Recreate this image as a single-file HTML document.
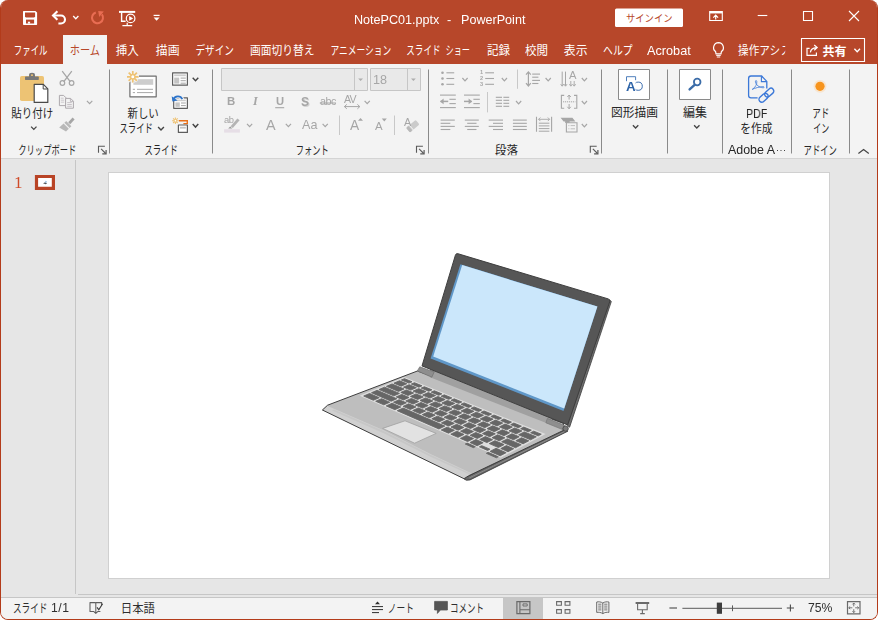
<!DOCTYPE html>
<html lang="ja"><head><meta charset="utf-8"><title>NotePC01.pptx - PowerPoint</title>
<style>
html,body{margin:0;padding:0;background:#fff;}
body{width:878px;height:620px;overflow:hidden;font-family:"Liberation Sans",sans-serif;}
#app{position:relative;width:878px;height:620px;overflow:hidden;background:#fff;}
#win{position:absolute;left:0;top:0;width:876px;height:619px;border:1px solid #B33B1A;border-top:none;border-radius:8px;overflow:hidden;background:#E6E6E6;box-sizing:content-box;}
.abs{position:absolute;}
.t{position:absolute;white-space:pre;will-change:transform;}
svg#ov{position:absolute;left:0;top:0;}
svg#ov text{font-family:"Liberation Sans","Noto Sans CJK JP",sans-serif;}
</style></head>
<body><div id="app">
<div id="win">
<div class="abs" style="left:-1px;top:0px;width:878px;height:64px;background:#B7472A;"></div><div class="abs" style="left:62px;top:35px;width:44px;height:29px;background:#F3F3F3;"></div><div class="abs" style="left:0px;top:64px;width:876px;height:94px;background:#F3F3F3;"></div><div class="abs" style="left:0px;top:158px;width:876px;height:1px;background:#D4D4D4;"></div><div class="abs" style="left:0px;top:159px;width:876px;height:438px;background:#E6E6E6;"></div><div class="abs" style="left:74px;top:160px;width:1px;height:434px;background:#C6C6C6;"></div><div class="abs" style="left:77px;top:594px;width:799px;height:1px;background:#C6C6C6;"></div><div class="abs" style="left:107px;top:172px;width:722px;height:407px;background:#FFFFFF;box-sizing:border-box;border:1px solid #D0D0D0;"></div><div class="abs" style="left:0px;top:597px;width:876px;height:1px;background:#C6C6C6;"></div><div class="abs" style="left:0px;top:598px;width:876px;height:21px;background:#F3F3F3;"></div><div class="abs" style="left:502px;top:598px;width:40px;height:21px;background:#C6C6C6;"></div>
</div>
<svg id="ov" width="878" height="620" viewBox="0 0 878 620">
<path d="M23 11.6A0.7 0.7 0 0 1 23.7 10.9H35.4L37.1 12.6V24.3A0.7 0.7 0 0 1 36.4 25H23.7A0.7 0.7 0 0 1 23 24.3Z" fill="#FFFFFF" />
<path d="M25 12.5H35.1V16.4L34.2 17.6H25.9L25 16.4Z" fill="#B7472A" />
<rect x="26" y="19.6" width="8.1" height="3.9" fill="#B7472A" />
<rect x="27.9" y="21.7" width="2.2" height="1.9" fill="#FFFFFF" />
<path d="M57.4 11.2L53 15.5L57.4 19.8" fill="none" stroke="#FFFFFF" stroke-width="2.1" />
<path d="M53.4 15.5H61A4 4 0 0 1 61 23.5H58.4" fill="none" stroke="#FFFFFF" stroke-width="2.1" />
<path d="M73.2 15.999999999999998L75.8 18.799999999999997L78.39999999999999 15.999999999999998" fill="none" stroke="#FFFFFF" stroke-width="1.3" />
<path d="M95.8 12.5A5.5 5.5 0 1 0 101.9 14.4" fill="none" stroke="#E96D53" stroke-width="2" />
<path d="M98.2 11.1L103.8 11.5L99.2 16.9Z" fill="#E96D53" />
<path d="M119 11.9H135.2" fill="none" stroke="#FFFFFF" stroke-width="2" />
<path d="M121.6 12V21.2H125.6" fill="none" stroke="#FFFFFF" stroke-width="1.4" />
<circle cx="130.6" cy="18.4" r="4.3" fill="none" stroke="#FFFFFF" stroke-width="1.2"/>
<path d="M129.2 16L133.2 18.4L129.2 20.8Z" fill="#FFFFFF" />
<path d="M127.2 22.8V25.4M122.4 25.6H132.2" fill="none" stroke="#FFFFFF" stroke-width="1.2" />
<path d="M153.6 15.4H159.6" fill="none" stroke="#FFFFFF" stroke-width="1.2" />
<path d="M153.6 17.6H159.6L156.6 20.8Z" fill="#FFFFFF" />
<rect x="615" y="8.5" width="68" height="18.5" fill="#FFFFFF" rx="1.5"/>
<text x="626" y="22.3" font-size="10" fill="#B7472A" textLength="46.5" lengthAdjust="spacingAndGlyphs">サインイン</text>
<path d="M709.7 11.5H722.3V20.5H709.7Z" fill="none" stroke="#FFFFFF" stroke-width="1.1" />
<path d="M709.7 12.5H722.3" fill="none" stroke="#FFFFFF" stroke-width="1.9" />
<path d="M715.7 19.4V15.4M713.3 17.6L715.7 15.2L718.1 17.6" fill="none" stroke="#FFFFFF" stroke-width="1.2" />
<path d="M757.7 15.5H767.3" fill="none" stroke="#FFFFFF" stroke-width="1.1" />
<path d="M803.5 11.5H812.5V20.5H803.5Z" fill="none" stroke="#FFFFFF" stroke-width="1.1" />
<path d="M849 11L859 21M859 11L849 21" fill="none" stroke="#FFFFFF" stroke-width="1.1" />
<text x="13.8" y="55.3" font-size="12" fill="#FFFFFF" textLength="33.7" lengthAdjust="spacingAndGlyphs">ファイル</text>
<text x="69.8" y="55.3" font-size="12" fill="#B7472A" textLength="30.2" lengthAdjust="spacingAndGlyphs">ホーム</text>
<text x="115.8" y="55.3" font-size="12" fill="#FFFFFF" textLength="23" lengthAdjust="spacingAndGlyphs">挿入</text>
<text x="155.8" y="55.3" font-size="12" fill="#FFFFFF" textLength="23.7" lengthAdjust="spacingAndGlyphs">描画</text>
<text x="195.5" y="55.3" font-size="12" fill="#FFFFFF" textLength="38.3" lengthAdjust="spacingAndGlyphs">デザイン</text>
<text x="250" y="55.3" font-size="12" fill="#FFFFFF" textLength="64.5" lengthAdjust="spacingAndGlyphs">画面切り替え</text>
<text x="330.5" y="55.3" font-size="12" fill="#FFFFFF" textLength="60.7" lengthAdjust="spacingAndGlyphs">アニメーション</text>
<text x="406.3" y="55.3" font-size="12" fill="#FFFFFF" textLength="34.2" lengthAdjust="spacingAndGlyphs">スライド</text>
<text x="445.5" y="55.3" font-size="12" fill="#FFFFFF" textLength="24.5" lengthAdjust="spacingAndGlyphs">ショー</text>
<text x="487" y="55.3" font-size="12" fill="#FFFFFF" textLength="23" lengthAdjust="spacingAndGlyphs">記録</text>
<text x="525" y="55.3" font-size="12" fill="#FFFFFF" textLength="23" lengthAdjust="spacingAndGlyphs">校閲</text>
<text x="563.8" y="55.3" font-size="12" fill="#FFFFFF" textLength="23.7" lengthAdjust="spacingAndGlyphs">表示</text>
<text x="603.1" y="55.3" font-size="12" fill="#FFFFFF" textLength="29.5" lengthAdjust="spacingAndGlyphs">ヘルプ</text>
<path d="M718.5 42.6A5 5 0 0 1 721.4 51.6L721 53.8H716L715.6 51.6A5 5 0 0 1 718.5 42.6Z" fill="none" stroke="#FFFFFF" stroke-width="1.2" />
<path d="M716.2 55.4H720.8M716.8 57H720.2" fill="none" stroke="#FFFFFF" stroke-width="1" />
<text x="738.1" y="55.3" font-size="12" fill="#FFFFFF" textLength="41.9" lengthAdjust="spacingAndGlyphs">操作アシ</text>
<clipPath id="cpt"><rect x="0" y="-12" width="4.2" height="16"/></clipPath>
<text transform="translate(781 55.3)" x="0" y="0" font-size="12" fill="#FFFFFF" clip-path="url(#cpt)" textLength="9.2" lengthAdjust="spacingAndGlyphs">ス</text>
<path d="M801.5 38.5H864.5V61.5H801.5Z" fill="none" stroke="#FFFFFF" stroke-width="1.1" />
<path d="M809.6 48.4H807V55.4H816.4V52.6" fill="none" stroke="#FFFFFF" stroke-width="1.2" />
<path d="M810.4 52.4C810.8 49.4 813 47.8 816.4 47.6M814.2 45L817.2 47.6L814.2 50.2" fill="none" stroke="#FFFFFF" stroke-width="1.2" />
<text x="822.4" y="55.7" font-size="12" font-weight="bold" fill="#FFFFFF" textLength="24" lengthAdjust="spacingAndGlyphs">共有</text>
<path d="M854.4000000000001 48.7L857.2 51.7L860.0 48.7" fill="none" stroke="#FFFFFF" stroke-width="1.3" />
<line x1="109.5" y1="69.5" x2="109.5" y2="153.5" stroke="#8A8A8A" stroke-width="1" />
<line x1="212.5" y1="69.5" x2="212.5" y2="153.5" stroke="#8A8A8A" stroke-width="1" />
<line x1="428.5" y1="69.5" x2="428.5" y2="153.5" stroke="#8A8A8A" stroke-width="1" />
<line x1="601.5" y1="69.5" x2="601.5" y2="153.5" stroke="#8A8A8A" stroke-width="1" />
<line x1="667.5" y1="69.5" x2="667.5" y2="153.5" stroke="#8A8A8A" stroke-width="1" />
<line x1="722.5" y1="69.5" x2="722.5" y2="153.5" stroke="#8A8A8A" stroke-width="1" />
<line x1="791.5" y1="69.5" x2="791.5" y2="153.5" stroke="#8A8A8A" stroke-width="1" />
<line x1="849.5" y1="69.5" x2="849.5" y2="153.5" stroke="#8A8A8A" stroke-width="1" />
<clipPath id="cgl"><rect x="-5" y="-20" width="120" height="20.75"/></clipPath>
<rect x="20" y="76" width="24" height="25" fill="#EDC374" rx="1.8"/>
<rect x="25" y="76.6" width="13.8" height="3.3" fill="#787878" rx="0.6"/>
<path d="M29 77V75.2A3 2.4 0 0 1 35 75.2V77Z" fill="#787878" />
<rect x="31" y="74.4" width="2" height="1.5" fill="#EDC374" />
<path d="M34.2 84.4H43.4L47.8 88.8V102.4H34.2Z" fill="#FFFFFF" stroke="#4A4A4A" stroke-width="1.2" stroke-linejoin="round"/>
<path d="M43.2 84.6V89H47.6" fill="none" stroke="#4A4A4A" stroke-width="1" />
<text x="11.3" y="118.3" font-size="12" fill="#262626" textLength="42" lengthAdjust="spacingAndGlyphs">貼り付け</text>
<path d="M31.099999999999998 126.6L33.8 129.4L36.5 126.6" fill="none" stroke="#444444" stroke-width="1.3" />
<path d="M62.2 71.2L70.2 81.6M71.8 71.2L63.8 81.6" fill="none" stroke="#A6A6A6" stroke-width="1.3" />
<circle cx="62.4" cy="83" r="2.3" fill="none" stroke="#A6A6A6" stroke-width="1.2"/>
<circle cx="71.6" cy="83" r="2.3" fill="none" stroke="#A6A6A6" stroke-width="1.2"/>
<path d="M59.4 95.4H63.6L66 97.8V105.6H59.4Z" fill="#F3F3F3" stroke="#ADA8AD" stroke-width="1" />
<path d="M60.8 98.2H63.6M60.8 100.2H64.2M60.8 102.2H64.2" fill="none" stroke="#C4BEC4" stroke-width="0.8" />
<path d="M65.6 98.4H70.6L73.4 101.2V108.2H65.6Z" fill="#F3F3F3" stroke="#ADA8AD" stroke-width="1" />
<path d="M70.4 98.6V101.4H73.2" fill="none" stroke="#ADA8AD" stroke-width="0.8" />
<path d="M67.2 102.6H71.8M67.2 104.5H71.8M67.2 106.3H71.8" fill="none" stroke="#BDB6BD" stroke-width="0.8" />
<path d="M86.89999999999999 100.8L89.6 103.60000000000001L92.3 100.8" fill="none" stroke="#A6A6A6" stroke-width="1.2" />
<path d="M68.2 122.2L72.6 117.6L74.6 119.6L70.2 124.2Z" fill="#A6A6A6" />
<path d="M66.2 121L71.4 126.2L69.6 128L64.4 122.8Z" fill="#B8B8B8" />
<path d="M63.6 123.6L68.8 128.8L66 131.4L59.2 127.6Z" fill="#B8B8B8" />
<text transform="translate(18.3 154.5)" x="0" y="0" font-size="12" fill="#262626" clip-path="url(#cgl)" textLength="58" lengthAdjust="spacingAndGlyphs">クリップボード</text>
<path d="M98.5 152.70000000000002V146.3H104.9" fill="none" stroke="#5A5A5A" stroke-width="1.1" />
<path d="M101.1 148.9L105.7 153.5" fill="none" stroke="#5A5A5A" stroke-width="1.1" />
<path d="M102.3 153.9H106.1V150.10000000000002" fill="none" stroke="#5A5A5A" stroke-width="1.2" />
<path d="M129.9 76.2H156.2V96.8H129.9Z" fill="#FFFFFF" stroke="#6E6E6E" stroke-width="1.2" stroke-linejoin="round"/>
<rect x="133.4" y="79.2" width="19.8" height="5.6" fill="#CDCDCD" />
<path d="M132.8 89.3H135M137 89.3H153M132.8 92.6H135M137 92.6H153" fill="none" stroke="#A8A8A8" stroke-width="1" />
<path d="M132.8 70.6V83M126.6 76.8H139M128.4 72.4L137.2 81.2M137.2 72.4L128.4 81.2" fill="none" stroke="#F3F3F3" stroke-width="3.4" />
<path d="M132.8 71V82.6M127 76.8H138.6M128.7 72.7L136.9 80.9M136.9 72.7L128.7 80.9" fill="none" stroke="#EEC273" stroke-width="1.7" />
<circle cx="132.8" cy="76.8" r="2.1" fill="#FFFFFF" stroke="#EEC273" stroke-width="1.2"/>
<text x="127.5" y="118.3" font-size="12" fill="#262626" textLength="31.3" lengthAdjust="spacingAndGlyphs">新しい</text>
<text x="119.5" y="133.2" font-size="12" fill="#262626" textLength="33.5" lengthAdjust="spacingAndGlyphs">スライド</text>
<path d="M158.1 127.1L161 130.1L163.9 127.1" fill="none" stroke="#444444" stroke-width="1.4" />
<path d="M172.6 72.8H187.4V85.2H172.6Z" fill="#FFFFFF" stroke="#5E5E5E" stroke-width="1.2" stroke-linejoin="round"/>
<rect x="174.2" y="74.4" width="11.6" height="1.8" fill="#CDCDCD" />
<rect x="174.2" y="77.6" width="5" height="6" fill="#C4C4C4" />
<path d="M180.6 78.1H185.8M180.6 80.7H185.8M180.6 83.2H185.8" fill="none" stroke="#9A9A9A" stroke-width="0.9" />
<path d="M192.7 77.8L195.5 80.8L198.3 77.8" fill="none" stroke="#444444" stroke-width="1.4" />
<path d="M173.7 97.8H187.4V108.3H173.7Z" fill="#FFFFFF" stroke="#5E5E5E" stroke-width="1.2" stroke-linejoin="round"/>
<rect x="175.4" y="99.6" width="10.4" height="1.6" fill="#CDCDCD" />
<rect x="175.4" y="102.4" width="4.4" height="4.4" fill="#C4C4C4" />
<path d="M181 103H185.8M181 105.6H185.8" fill="none" stroke="#9A9A9A" stroke-width="0.9" />
<path d="M182.4 99.4A4.9 4.9 0 0 0 173.2 99.8" fill="none" stroke="#F3F3F3" stroke-width="3.8" />
<path d="M182.3 99.2A4.8 4.8 0 0 0 173.4 99.6" fill="none" stroke="#2E74C9" stroke-width="1.9" />
<path d="M171.7 96.2L172.4 101.6L177.6 100.6Z" fill="#2E74C9" />
<path d="M178.2 120.8H187.3V123.6H183.4" fill="none" stroke="#E8701A" stroke-width="1.4" />
<path d="M178.4 125H187.4V132.4H178.4Z" fill="#FFFFFF" stroke="#5E5E5E" stroke-width="1.2" stroke-linejoin="round"/>
<rect x="180" y="126.8" width="5.8" height="1.8" fill="#C4C4C4" />
<path d="M175.4 117.2V124.2M171.9 120.7H178.9M172.9 118.2L177.9 123.2M177.9 118.2L172.9 123.2" fill="none" stroke="#F3F3F3" stroke-width="2.4" />
<path d="M175.4 117.4V124M172.1 120.7H178.7M173.1 118.4L177.7 123M177.7 118.4L173.1 123" fill="none" stroke="#EEC273" stroke-width="1.1" />
<circle cx="175.4" cy="120.7" r="1.2" fill="#FFFFFF" stroke="#EEC273" stroke-width="0.8"/>
<path d="M192.7 124.1L195.5 127.1L198.3 124.1" fill="none" stroke="#444444" stroke-width="1.4" />
<text transform="translate(144.5 154.5)" x="0" y="0" font-size="12" fill="#262626" clip-path="url(#cgl)" textLength="33.5" lengthAdjust="spacingAndGlyphs">スライド</text>
<path d="M221.5 68.5H367.5V90.5H221.5Z" fill="#E9E9E9" stroke="#C6C6C6" stroke-width="1" />
<line x1="354.5" y1="69" x2="354.5" y2="90" stroke="#C6C6C6" stroke-width="1" />
<path d="M358.2 78.4H363L360.6 81Z" fill="#ADADAD" />
<path d="M370.5 68.5H420.5V90.5H370.5Z" fill="#E9E9E9" stroke="#C6C6C6" stroke-width="1" />
<line x1="407.5" y1="69" x2="407.5" y2="90" stroke="#C6C6C6" stroke-width="1" />
<path d="M411 78.4H415.8L413.4 81Z" fill="#ADADAD" />
<line x1="275.2" y1="107.7" x2="284.2" y2="107.7" stroke="#A6A6A6" stroke-width="1.1" />
<line x1="319.8" y1="103" x2="336" y2="103" stroke="#A6A6A6" stroke-width="1" />
<path d="M344.4 106.6H359.8M346.8 104.4L344.4 106.6L346.8 108.8M357.4 104.4L359.8 106.6L357.4 108.8" fill="none" stroke="#A6A6A6" stroke-width="1" />
<path d="M364.59999999999997 100.8L367.2 103.60000000000001L369.8 100.8" fill="none" stroke="#A6A6A6" stroke-width="1.2" />
<path d="M230.6 126.2L237.4 118.4L239.6 120.2L232.8 128Z" fill="#B4B4B4" />
<path d="M228.2 128.6L230.2 126.6L232.4 128.4Z" fill="#9A9A9A" />
<rect x="224.1" y="129.2" width="15.8" height="3.4" fill="#E6DEE6" />
<path d="M247.0 123.8L249.6 126.60000000000001L252.2 123.8" fill="none" stroke="#A6A6A6" stroke-width="1.2" />
<path d="M285.79999999999995 123.8L288.4 126.60000000000001L291.0 123.8" fill="none" stroke="#A6A6A6" stroke-width="1.2" />
<path d="M322.59999999999997 123.8L325.2 126.60000000000001L327.8 123.8" fill="none" stroke="#A6A6A6" stroke-width="1.2" />
<line x1="339.5" y1="115.5" x2="339.5" y2="135" stroke="#C8C8C8" stroke-width="1" />
<path d="M358 120.8H363L360.5 118Z" fill="#A6A6A6" />
<path d="M381.8 118.6H386.8L384.3 121.4Z" fill="#A6A6A6" />
<line x1="394.5" y1="115.5" x2="394.5" y2="135" stroke="#C8C8C8" stroke-width="1" />
<g transform="translate(412.8 126.2) rotate(-40)"><rect x="-6.2" y="-3" width="12.4" height="6" rx="1.2" fill="#CBCBCB"/><rect x="-6.2" y="-3" width="3" height="6" rx="1" fill="#B9B9B9"/><rect x="-2.4" y="-3.6" width="0.9" height="7.2" fill="#F3F3F3"/></g>
<text transform="translate(295.8 154.5)" x="0" y="0" font-size="12" fill="#262626" clip-path="url(#cgl)" textLength="33" lengthAdjust="spacingAndGlyphs">フォント</text>
<path d="M416.5 152.70000000000002V146.3H422.9" fill="none" stroke="#5A5A5A" stroke-width="1.1" />
<path d="M419.1 148.9L423.7 153.5" fill="none" stroke="#5A5A5A" stroke-width="1.1" />
<path d="M420.3 153.9H424.1V150.10000000000002" fill="none" stroke="#5A5A5A" stroke-width="1.2" />
<circle cx="442.5" cy="72.8" r="1.3" fill="#A6A6A6"/>
<line x1="446.4" y1="72.8" x2="454.2" y2="72.8" stroke="#A6A6A6" stroke-width="1.1" />
<circle cx="442.5" cy="78.5" r="1.3" fill="#A6A6A6"/>
<line x1="446.4" y1="78.5" x2="454.2" y2="78.5" stroke="#A6A6A6" stroke-width="1.1" />
<circle cx="442.5" cy="84.3" r="1.3" fill="#A6A6A6"/>
<line x1="446.4" y1="84.3" x2="454.2" y2="84.3" stroke="#A6A6A6" stroke-width="1.1" />
<path d="M462.4 78.0L465 80.80000000000001L467.6 78.0" fill="none" stroke="#A6A6A6" stroke-width="1.2" />
<line x1="485.2" y1="72.8" x2="494" y2="72.8" stroke="#A6A6A6" stroke-width="1.1" />
<line x1="485.2" y1="78.5" x2="494" y2="78.5" stroke="#A6A6A6" stroke-width="1.1" />
<line x1="485.2" y1="84.3" x2="494" y2="84.3" stroke="#A6A6A6" stroke-width="1.1" />
<path d="M501.79999999999995 78.0L504.4 80.80000000000001L507.0 78.0" fill="none" stroke="#A6A6A6" stroke-width="1.2" />
<line x1="517.5" y1="69.5" x2="517.5" y2="88.8" stroke="#C8C8C8" stroke-width="1" />
<path d="M528.4 72V85.8M526 74.6L528.4 71.8L530.8 74.6M526 83.2L528.4 86L530.8 83.2" fill="none" stroke="#A6A6A6" stroke-width="1.2" />
<line x1="532.2" y1="74.1" x2="540" y2="74.1" stroke="#A6A6A6" stroke-width="1.1" />
<line x1="532.2" y1="77.2" x2="538.4" y2="77.2" stroke="#A6A6A6" stroke-width="1.1" />
<line x1="532.2" y1="80.4" x2="540" y2="80.4" stroke="#A6A6A6" stroke-width="1.1" />
<line x1="532.2" y1="83.5" x2="538.4" y2="83.5" stroke="#A6A6A6" stroke-width="1.1" />
<path d="M545.6 78.0L548.2 80.80000000000001L550.8000000000001 78.0" fill="none" stroke="#A6A6A6" stroke-width="1.2" />
<path d="M562.2 71.6V85.8M560.7 84.2L562.2 86.2L563.7 84.2" fill="none" stroke="#A6A6A6" stroke-width="1" />
<path d="M565.5 71.6V85.8M564.0 84.2L565.5 86.2L567.0 84.2" fill="none" stroke="#A6A6A6" stroke-width="1" />
<path d="M570.8 81V85.8M569.3 84.2L570.8 86.2L572.3 84.2" fill="none" stroke="#A6A6A6" stroke-width="0.9" />
<path d="M574.2 81V85.8M572.7 84.2L574.2 86.2L575.7 84.2" fill="none" stroke="#A6A6A6" stroke-width="0.9" />
<path d="M581.8 78.0L584.4 80.80000000000001L587.0 78.0" fill="none" stroke="#A6A6A6" stroke-width="1.2" />
<line x1="440" y1="95.1" x2="455.8" y2="95.1" stroke="#A6A6A6" stroke-width="1.1" />
<line x1="440" y1="107.6" x2="455.8" y2="107.6" stroke="#A6A6A6" stroke-width="1.1" />
<line x1="449.4" y1="99.3" x2="455.8" y2="99.3" stroke="#A6A6A6" stroke-width="1.1" />
<line x1="449.4" y1="103.6" x2="455.8" y2="103.6" stroke="#A6A6A6" stroke-width="1.1" />
<path d="M448.2 101.4H440.6" fill="none" stroke="#A6A6A6" stroke-width="1.5" />
<path d="M443.6 98.6L440 101.4L443.6 104.2Z" fill="#A6A6A6" />
<line x1="464" y1="95.1" x2="479.8" y2="95.1" stroke="#A6A6A6" stroke-width="1.1" />
<line x1="464" y1="107.6" x2="479.8" y2="107.6" stroke="#A6A6A6" stroke-width="1.1" />
<line x1="473.4" y1="99.3" x2="479.8" y2="99.3" stroke="#A6A6A6" stroke-width="1.1" />
<line x1="473.4" y1="103.6" x2="479.8" y2="103.6" stroke="#A6A6A6" stroke-width="1.1" />
<path d="M464 101.4H471.6" fill="none" stroke="#A6A6A6" stroke-width="1.5" />
<path d="M468.6 98.6L472.2 101.4L468.6 104.2Z" fill="#A6A6A6" />
<line x1="487.5" y1="92" x2="487.5" y2="112.4" stroke="#C8C8C8" stroke-width="1" />
<line x1="495.8" y1="97.3" x2="502" y2="97.3" stroke="#A6A6A6" stroke-width="1.1" />
<line x1="503.4" y1="97.3" x2="509.2" y2="97.3" stroke="#A6A6A6" stroke-width="1.1" />
<line x1="495.8" y1="100.3" x2="502" y2="100.3" stroke="#A6A6A6" stroke-width="1.1" />
<line x1="503.4" y1="100.3" x2="509.2" y2="100.3" stroke="#A6A6A6" stroke-width="1.1" />
<line x1="495.8" y1="103.3" x2="502" y2="103.3" stroke="#A6A6A6" stroke-width="1.1" />
<line x1="503.4" y1="103.3" x2="509.2" y2="103.3" stroke="#A6A6A6" stroke-width="1.1" />
<line x1="495.8" y1="106.3" x2="502" y2="106.3" stroke="#A6A6A6" stroke-width="1.1" />
<line x1="503.4" y1="106.3" x2="509.2" y2="106.3" stroke="#A6A6A6" stroke-width="1.1" />
<path d="M516.0 101.0L518.6 103.80000000000001L521.2 101.0" fill="none" stroke="#A6A6A6" stroke-width="1.2" />
<path d="M564.2 95.4H561.4V108.2H564.2M574 95.4H576.8V108.2H574" fill="none" stroke="#A6A6A6" stroke-width="1.1" />
<path d="M563 101.8H575.4" fill="none" stroke="#A6A6A6" stroke-width="1" stroke-dasharray="1.2 0.8"/>
<path d="M569.1 95.2V99.6M567.4 97L569.1 95L570.8 97M569.1 108.6V104M567.4 106.8L569.1 108.8L570.8 106.8" fill="none" stroke="#A6A6A6" stroke-width="1" />
<path d="M581.8 101.0L584.4 103.80000000000001L587.0 101.0" fill="none" stroke="#A6A6A6" stroke-width="1.2" />
<line x1="440.6" y1="120.1" x2="454.8" y2="120.1" stroke="#A6A6A6" stroke-width="1.1" />
<line x1="464.8" y1="120.1" x2="478.8" y2="120.1" stroke="#A6A6A6" stroke-width="1.1" />
<line x1="488.7" y1="120.1" x2="503" y2="120.1" stroke="#A6A6A6" stroke-width="1.1" />
<line x1="512.9" y1="120.1" x2="526.8" y2="120.1" stroke="#A6A6A6" stroke-width="1.1" />
<line x1="440.6" y1="123.3" x2="450.3" y2="123.3" stroke="#A6A6A6" stroke-width="1.1" />
<line x1="467.2" y1="123.3" x2="476.5" y2="123.3" stroke="#A6A6A6" stroke-width="1.1" />
<line x1="493" y1="123.3" x2="503" y2="123.3" stroke="#A6A6A6" stroke-width="1.1" />
<line x1="512.9" y1="123.3" x2="526.8" y2="123.3" stroke="#A6A6A6" stroke-width="1.1" />
<line x1="440.6" y1="126.4" x2="454.8" y2="126.4" stroke="#A6A6A6" stroke-width="1.1" />
<line x1="464.8" y1="126.4" x2="478.8" y2="126.4" stroke="#A6A6A6" stroke-width="1.1" />
<line x1="488.7" y1="126.4" x2="503" y2="126.4" stroke="#A6A6A6" stroke-width="1.1" />
<line x1="512.9" y1="126.4" x2="526.8" y2="126.4" stroke="#A6A6A6" stroke-width="1.1" />
<line x1="440.6" y1="129.5" x2="450.3" y2="129.5" stroke="#A6A6A6" stroke-width="1.1" />
<line x1="467.2" y1="129.5" x2="476.5" y2="129.5" stroke="#A6A6A6" stroke-width="1.1" />
<line x1="493" y1="129.5" x2="503" y2="129.5" stroke="#A6A6A6" stroke-width="1.1" />
<line x1="512.9" y1="129.5" x2="526.8" y2="129.5" stroke="#A6A6A6" stroke-width="1.1" />
<path d="M536.5 116.8V131.8M551.6 116.8V131.8" fill="none" stroke="#A6A6A6" stroke-width="1.1" />
<path d="M538.6 119.3H549.6M540.4 117.5L538.6 119.3L540.4 121.1M547.8 117.5L549.6 119.3L547.8 121.1" fill="none" stroke="#A6A6A6" stroke-width="0.9" />
<line x1="538.8" y1="123.2" x2="549.4" y2="123.2" stroke="#A6A6A6" stroke-width="1" />
<line x1="538.8" y1="125.9" x2="549.4" y2="125.9" stroke="#A6A6A6" stroke-width="1" />
<line x1="538.8" y1="128.6" x2="549.4" y2="128.6" stroke="#A6A6A6" stroke-width="1" />
<line x1="538.8" y1="131.2" x2="549.4" y2="131.2" stroke="#A6A6A6" stroke-width="1" />
<path d="M560.6 117.8H572.4L575.4 121.4H569.6V123H565.2V121.6L563.6 121.6Z" fill="#A6A6A6" />
<path d="M566.4 122.8H577V132H566.4Z" fill="#F3F3F3" stroke="#A6A6A6" stroke-width="1.1" />
<path d="M568.4 125.6H569.4M570.6 125.6H575M568.4 128.8H569.4M570.6 128.8H575" fill="none" stroke="#B8B8B8" stroke-width="0.9" />
<path d="M581.8 124.0L584.4 126.80000000000001L587.0 124.0" fill="none" stroke="#A6A6A6" stroke-width="1.2" />
<text transform="translate(495 154.5)" x="0" y="0" font-size="12" fill="#262626" clip-path="url(#cgl)" textLength="23" lengthAdjust="spacingAndGlyphs">段落</text>
<path d="M590.3 152.70000000000002V146.3H596.6999999999999" fill="none" stroke="#5A5A5A" stroke-width="1.1" />
<path d="M592.9 148.9L597.5 153.5" fill="none" stroke="#5A5A5A" stroke-width="1.1" />
<path d="M594.0999999999999 153.9H597.9V150.10000000000002" fill="none" stroke="#5A5A5A" stroke-width="1.2" />
<path d="M618.5 69.5H649.5V99.5H618.5Z" fill="#FFFFFF" stroke="#8A8A8A" stroke-width="1" />
<path d="M626.5 81.2V76.7H635.6V80.2" fill="none" stroke="#4F7FBC" stroke-width="1" />
<circle cx="638.2" cy="86.2" r="4.1" fill="none" stroke="#3E6FB0" stroke-width="1"/>
<rect x="627" y="81.4" width="8.6" height="10.6" fill="#FFFFFF" />
<text x="611" y="117.4" font-size="12" fill="#262626" textLength="47" lengthAdjust="spacingAndGlyphs">図形描画</text>
<path d="M632.9 125.19999999999999L635.6 128.0L638.3000000000001 125.19999999999999" fill="none" stroke="#444444" stroke-width="1.3" />
<path d="M679.5 69.5H710.5V99.5H679.5Z" fill="#FFFFFF" stroke="#8A8A8A" stroke-width="1" />
<circle cx="697.2" cy="82" r="3.3" fill="none" stroke="#3B6CA8" stroke-width="1.8"/>
<path d="M694.6 84.8L689.6 89.4" fill="none" stroke="#3B6CA8" stroke-width="2.4" stroke-linecap="round"/>
<text x="683" y="117.4" font-size="12" fill="#262626" textLength="24" lengthAdjust="spacingAndGlyphs">編集</text>
<path d="M694.0999999999999 125.19999999999999L696.8 128.0L699.5 125.19999999999999" fill="none" stroke="#444444" stroke-width="1.3" />
<path d="M757.6 97.8H751A2.4 2.4 0 0 1 748.6 95.4V78.4A2.4 2.4 0 0 1 751 76H761.6L766.8 81.4V88.6" fill="none" stroke="#3B78D8" stroke-width="1.3" />
<path d="M761.4 76.2V81.6H766.6" fill="none" stroke="#3B78D8" stroke-width="1.1" />
<path d="M752.2 89.4C755.4 87.6 757.2 83.8 756.8 81.4C756.6 80 755.2 80.2 755.4 81.8C755.8 84.6 759 87.6 763.2 87.8C764.6 87.8 764.4 86.4 762.8 86.6C759.6 86.8 755 88 752.2 89.4Z" fill="none" stroke="#3B78D8" stroke-width="0.8" />
<g transform="translate(766.4 95.2) rotate(-42)" fill="none" stroke="#3B78D8" stroke-width="1.4"><rect x="-9" y="-2.8" width="10.4" height="5.6" rx="2.8"/><rect x="-1.4" y="-2.8" width="10.4" height="5.6" rx="2.8"/></g>
<text x="740.3" y="133.2" font-size="12" fill="#262626" textLength="32.3" lengthAdjust="spacingAndGlyphs">を作成</text>
<circle cx="820" cy="86.3" r="6.4" fill="#FBD9B0" opacity="0.55"/>
<circle cx="820" cy="86.3" r="4.6" fill="#F7941D"/>
<text x="812.2" y="118.3" font-size="12" fill="#262626" textLength="17.2" lengthAdjust="spacingAndGlyphs">アド</text>
<text x="813.2" y="133.2" font-size="12" fill="#262626" textLength="16" lengthAdjust="spacingAndGlyphs">イン</text>
<text transform="translate(803.6 154.5)" x="0" y="0" font-size="12" fill="#262626" clip-path="url(#cgl)" textLength="33.3" lengthAdjust="spacingAndGlyphs">アドイン</text>
<path d="M858.4 153.6L863.6 149.6L868.8 153.6" fill="none" stroke="#444444" stroke-width="1.2" />
<path d="M36.5 176.5H53.4V188.3H36.5Z" fill="#FFFFFF" stroke="#B94426" stroke-width="3.2" />
<path d="M44.6 183L45.4 180.8L47 181.2L46.2 183.4Z" fill="#A9CBE6" />
<path d="M43 183.2L45.6 184.3L47.2 183.5L44.8 182.6Z" fill="#555" />
<text x="13" y="612.6" font-size="12" fill="#2E2E2E" textLength="34.5" lengthAdjust="spacingAndGlyphs">スライド</text>
<path d="M95.8 602.6V613.2M95.8 602.6H90V611.4H93.6L95.8 613.4L98 611.4H100.4" fill="none" stroke="#5E5E5E" stroke-width="1.05" stroke-linejoin="round"/>
<path d="M95.8 602.6H101.6V605" fill="none" stroke="#5E5E5E" stroke-width="1.05" />
<path d="M97 607.4L98.8 609.8L102.6 603.8" fill="none" stroke="#3E3E3E" stroke-width="1.2" />
<text x="120.8" y="612.6" font-size="12" fill="#2E2E2E" textLength="34.2" lengthAdjust="spacingAndGlyphs">日本語</text>
<path d="M372 606.6H383M372 609.6H383M372 612.6H379" fill="none" stroke="#2E2E2E" stroke-width="1" />
<path d="M375 604.2H380L377.5 601.4Z" fill="#2E2E2E" />
<text x="387.8" y="612.6" font-size="12" fill="#2E2E2E" textLength="26.2" lengthAdjust="spacingAndGlyphs">ノート</text>
<path d="M434.6 601.4H447.4V610H440.4L437.4 613.4V610H434.6Z" fill="#555" stroke="#555" stroke-width="0.8" stroke-linejoin="round"/>
<text x="450" y="612.6" font-size="12" fill="#2E2E2E" textLength="34" lengthAdjust="spacingAndGlyphs">コメント</text>
<path d="M516.9 601.6H529.9V613.6H516.9Z" fill="none" stroke="#6A6A6A" stroke-width="1.2" />
<path d="M519.9 601.6V613.6M519.9 609.8H529.9" fill="none" stroke="#6A6A6A" stroke-width="1.1" />
<path d="M523 603.9H527.2V606H523Z" fill="none" stroke="#6A6A6A" stroke-width="0.9" />
<path d="M556.6 601.6H561.4V605.3000000000001H556.6Z" fill="none" stroke="#6A6A6A" stroke-width="1.1" />
<path d="M565.1 601.6H569.9V605.3000000000001H565.1Z" fill="none" stroke="#6A6A6A" stroke-width="1.1" />
<path d="M556.6 609.6H561.4V613.3000000000001H556.6Z" fill="none" stroke="#6A6A6A" stroke-width="1.1" />
<path d="M565.1 609.6H569.9V613.3000000000001H565.1Z" fill="none" stroke="#6A6A6A" stroke-width="1.1" />
<path d="M602.8 603V613.8M602.8 603C601 601.8 598.4 601.6 596.7 602V612.4C598.4 612 601 612.4 602.8 613.6C604.6 612.4 607.2 612 608.9 612.4V602C607.2 601.6 604.6 601.8 602.8 603" fill="none" stroke="#6A6A6A" stroke-width="1" />
<path d="M598.2 604.2H601.4M598.2 606.1H601.4M598.2 608H601.4M598.2 609.9H601.4M604.2 604.2H607.4M604.2 606.1H607.4M604.2 608H607.4M604.2 609.9H607.4" fill="none" stroke="#6A6A6A" stroke-width="0.9" />
<path d="M635.6 603H649.2" fill="none" stroke="#6A6A6A" stroke-width="2" />
<path d="M637.6 604V609.8H647.2V604" fill="none" stroke="#6A6A6A" stroke-width="1.1" />
<path d="M642.4 609.8V613.4M640.2 613.6H644.8" fill="none" stroke="#6A6A6A" stroke-width="1.1" />
<line x1="669.4" y1="608" x2="677" y2="608" stroke="#4A4A4A" stroke-width="1.1" />
<line x1="682.4" y1="608.3" x2="782" y2="608.3" stroke="#5A5A5A" stroke-width="1" />
<rect x="716.8" y="602.6" width="5.2" height="11.2" fill="#3E3E3E" />
<line x1="732.5" y1="605.4" x2="732.5" y2="611.2" stroke="#5A5A5A" stroke-width="1" />
<path d="M786.8 608H794M790.4 604.4V611.6" fill="none" stroke="#4A4A4A" stroke-width="1.1" />
<path d="M847.5 601.7H860V613.9H847.5Z" fill="none" stroke="#6A6A6A" stroke-width="1.2" />
<path d="M853.75 606.4V603.0M853.75 609.1999999999999V612.5999999999999M852.35 607.8H848.75M855.15 607.8H858.75" fill="none" stroke="#6A6A6A" stroke-width="0.9" />
<path d="M852.45 604.4L853.75 603.0L855.05 604.4M852.45 611.1999999999999L853.75 612.5999999999999L855.05 611.1999999999999M850.15 606.5L848.75 607.8L850.15 609.0999999999999M857.35 606.5L858.75 607.8L857.35 609.0999999999999" fill="none" stroke="#6A6A6A" stroke-width="0.9" />
<path d="M464.00 478.90L468.60 475.80L565.00 429.60L567.80 431.20L470.00 479.90L466.40 480.20Z" fill="#686868" stroke="#3E3E3E" stroke-width="0.9" stroke-linejoin="round" />
<path d="M469.4 477.9L566.6 430.6" fill="none" stroke="#B0B0B0" stroke-width="0.5" />
<path d="M327.60 405.20L417.40 371.00L563.40 423.18L563.40 430.40L468.60 475.80L464.00 478.70L322.40 410.00Z" fill="#BEBEBE" stroke-linejoin="round" />
<path d="M322.40 410.00L464.00 478.70L468.60 475.80L471.40 473.20L430.00 453.80L383.70 430.20L328.80 406.40L327.60 405.20Z" fill="#D0D0D0" stroke-linejoin="round" />
<path d="M334.00 409.40L383.70 430.90L430.00 454.50L470.40 473.60L469.60 474.60L430.00 456.40L383.70 433.20L332.00 410.60Z" fill="#C7C7C7" stroke-linejoin="round" />
<path d="M327.60 405.20L417.40 371.00L563.40 423.18L563.40 430.40L468.60 475.80L464.00 478.70L322.40 410.00Z" fill="none" stroke="#3E3E3E" stroke-width="1" stroke-linejoin="round" />
<path d="M430.00 369.15L552.00 418.56L552.00 425.25L430.00 377.18Z" fill="#A0A0A0" stroke-linejoin="round" />
<path d="M417.30 370.90L419.80 366.80L434.20 371.90L431.80 377.20Z" fill="#8E8E8E" stroke="#707070" stroke-width="0.7" stroke-linejoin="round" />
<path d="M547.40 418.40L564.80 425.60L562.60 429.60L545.90 422.80Z" fill="#8E8E8E" stroke="#707070" stroke-width="0.6" stroke-linejoin="round" />
<circle cx="565.6" cy="428.6" r="2.7" fill="#7A7A7A" stroke="#3E3E3E" stroke-width="0.8"/>
<path d="M404.09 376.89L545.61 434.11L500.79 457.70L359.70 395.71Z" fill="#DEDEDE" stroke-linejoin="round" />
<path d="M404.47 378.68L412.01 381.75L408.94 383.07L401.40 379.99Z" fill="#666666" stroke="#666666" stroke-width="0.9" stroke-linejoin="round" />
<path d="M414.41 382.72L421.95 385.78L418.88 387.13L411.34 384.05Z" fill="#666666" stroke="#666666" stroke-width="0.9" stroke-linejoin="round" />
<path d="M424.35 386.76L431.89 389.82L428.82 391.19L421.28 388.11Z" fill="#666666" stroke="#666666" stroke-width="0.9" stroke-linejoin="round" />
<path d="M434.29 390.79L441.83 393.85L438.76 395.24L431.22 392.16Z" fill="#666666" stroke="#666666" stroke-width="0.9" stroke-linejoin="round" />
<path d="M444.23 394.83L451.78 397.89L448.70 399.30L441.16 396.22Z" fill="#666666" stroke="#666666" stroke-width="0.9" stroke-linejoin="round" />
<path d="M454.18 398.86L461.72 401.92L458.64 403.36L451.10 400.28Z" fill="#666666" stroke="#666666" stroke-width="0.9" stroke-linejoin="round" />
<path d="M464.12 402.90L471.66 405.96L468.58 407.42L461.04 404.34Z" fill="#666666" stroke="#666666" stroke-width="0.9" stroke-linejoin="round" />
<path d="M474.06 406.93L481.60 409.99L478.52 411.48L470.98 408.40Z" fill="#666666" stroke="#666666" stroke-width="0.9" stroke-linejoin="round" />
<path d="M484.00 410.97L491.55 414.03L488.46 415.54L480.92 412.46Z" fill="#666666" stroke="#666666" stroke-width="0.9" stroke-linejoin="round" />
<path d="M493.95 415.00L501.49 418.07L498.40 419.60L490.86 416.52Z" fill="#666666" stroke="#666666" stroke-width="0.9" stroke-linejoin="round" />
<path d="M503.89 419.04L511.43 422.10L508.34 423.66L500.80 420.58Z" fill="#666666" stroke="#666666" stroke-width="0.9" stroke-linejoin="round" />
<path d="M513.83 423.08L521.37 426.14L518.28 427.71L510.74 424.63Z" fill="#666666" stroke="#666666" stroke-width="0.9" stroke-linejoin="round" />
<path d="M523.77 427.11L531.31 430.17L528.22 431.77L520.68 428.69Z" fill="#666666" stroke="#666666" stroke-width="0.9" stroke-linejoin="round" />
<path d="M533.71 431.15L541.26 434.21L538.16 435.83L530.62 432.75Z" fill="#666666" stroke="#666666" stroke-width="0.9" stroke-linejoin="round" />
<path d="M399.53 380.78L406.73 383.73L401.12 386.15L393.93 383.17Z" fill="#666666" stroke="#666666" stroke-width="0.9" stroke-linejoin="round" />
<path d="M409.13 384.72L416.33 387.67L410.71 390.12L403.52 387.14Z" fill="#666666" stroke="#666666" stroke-width="0.9" stroke-linejoin="round" />
<path d="M418.73 388.65L425.92 391.60L420.31 394.10L413.11 391.12Z" fill="#666666" stroke="#666666" stroke-width="0.9" stroke-linejoin="round" />
<path d="M428.32 392.58L435.52 395.53L429.90 398.07L422.70 395.09Z" fill="#666666" stroke="#666666" stroke-width="0.9" stroke-linejoin="round" />
<path d="M437.92 396.51L445.11 399.46L439.49 402.04L432.30 399.06Z" fill="#666666" stroke="#666666" stroke-width="0.9" stroke-linejoin="round" />
<path d="M447.51 400.45L454.71 403.40L449.08 406.02L441.89 403.04Z" fill="#666666" stroke="#666666" stroke-width="0.9" stroke-linejoin="round" />
<path d="M457.11 404.38L464.31 407.33L458.68 409.99L451.48 407.01Z" fill="#666666" stroke="#666666" stroke-width="0.9" stroke-linejoin="round" />
<path d="M466.71 408.31L473.90 411.26L468.27 413.96L461.07 410.98Z" fill="#666666" stroke="#666666" stroke-width="0.9" stroke-linejoin="round" />
<path d="M476.30 412.24L483.50 415.19L477.86 417.94L470.67 414.96Z" fill="#666666" stroke="#666666" stroke-width="0.9" stroke-linejoin="round" />
<path d="M485.90 416.18L493.10 419.13L487.45 421.91L480.26 418.93Z" fill="#666666" stroke="#666666" stroke-width="0.9" stroke-linejoin="round" />
<path d="M495.49 420.11L502.69 423.06L497.05 425.88L489.85 422.90Z" fill="#666666" stroke="#666666" stroke-width="0.9" stroke-linejoin="round" />
<path d="M505.09 424.04L512.29 426.99L506.64 429.86L499.45 426.88Z" fill="#666666" stroke="#666666" stroke-width="0.9" stroke-linejoin="round" />
<path d="M514.69 427.97L521.88 430.92L516.23 433.83L509.04 430.85Z" fill="#666666" stroke="#666666" stroke-width="0.9" stroke-linejoin="round" />
<path d="M524.28 431.91L536.28 436.82L530.62 439.79L518.63 434.82Z" fill="#666666" stroke="#666666" stroke-width="0.9" stroke-linejoin="round" />
<path d="M392.06 383.97L404.05 388.95L398.44 391.39L386.45 386.35Z" fill="#666666" stroke="#666666" stroke-width="0.9" stroke-linejoin="round" />
<path d="M406.45 389.95L413.64 392.94L408.03 395.42L400.83 392.39Z" fill="#666666" stroke="#666666" stroke-width="0.9" stroke-linejoin="round" />
<path d="M416.04 393.93L423.23 396.92L417.61 399.44L410.42 396.42Z" fill="#666666" stroke="#666666" stroke-width="0.9" stroke-linejoin="round" />
<path d="M425.63 397.92L432.82 400.91L427.20 403.47L420.01 400.45Z" fill="#666666" stroke="#666666" stroke-width="0.9" stroke-linejoin="round" />
<path d="M435.22 401.91L442.41 404.90L436.79 407.50L429.60 404.48Z" fill="#666666" stroke="#666666" stroke-width="0.9" stroke-linejoin="round" />
<path d="M444.81 405.89L452.00 408.88L446.38 411.53L439.19 408.51Z" fill="#666666" stroke="#666666" stroke-width="0.9" stroke-linejoin="round" />
<path d="M454.40 409.88L461.60 412.87L455.96 415.55L448.77 412.53Z" fill="#666666" stroke="#666666" stroke-width="0.9" stroke-linejoin="round" />
<path d="M463.99 413.87L471.19 416.86L465.55 419.58L458.36 416.56Z" fill="#666666" stroke="#666666" stroke-width="0.9" stroke-linejoin="round" />
<path d="M473.58 417.85L480.78 420.84L475.14 423.61L467.95 420.59Z" fill="#666666" stroke="#666666" stroke-width="0.9" stroke-linejoin="round" />
<path d="M483.18 421.84L490.37 424.83L484.73 427.64L477.54 424.62Z" fill="#666666" stroke="#666666" stroke-width="0.9" stroke-linejoin="round" />
<path d="M492.77 425.83L499.96 428.82L494.31 431.66L487.12 428.64Z" fill="#666666" stroke="#666666" stroke-width="0.9" stroke-linejoin="round" />
<path d="M502.36 429.82L509.55 432.81L503.90 435.69L496.71 432.67Z" fill="#666666" stroke="#666666" stroke-width="0.9" stroke-linejoin="round" />
<path d="M511.95 433.80L519.14 436.79L513.49 439.72L506.30 436.70Z" fill="#666666" stroke="#666666" stroke-width="0.9" stroke-linejoin="round" />
<path d="M521.54 437.79L528.74 440.78L523.08 443.75L515.89 440.73Z" fill="#666666" stroke="#666666" stroke-width="0.9" stroke-linejoin="round" />
<path d="M384.58 387.15L399.44 393.41L393.83 395.86L378.98 389.54Z" fill="#666666" stroke="#666666" stroke-width="0.9" stroke-linejoin="round" />
<path d="M401.84 394.42L409.03 397.45L403.41 399.94L396.23 396.88Z" fill="#666666" stroke="#666666" stroke-width="0.9" stroke-linejoin="round" />
<path d="M411.43 398.46L418.62 401.50L413.00 404.03L405.81 400.97Z" fill="#666666" stroke="#666666" stroke-width="0.9" stroke-linejoin="round" />
<path d="M421.01 402.51L428.20 405.54L422.58 408.11L415.39 405.05Z" fill="#666666" stroke="#666666" stroke-width="0.9" stroke-linejoin="round" />
<path d="M430.60 406.55L437.79 409.58L432.16 412.19L424.98 409.13Z" fill="#666666" stroke="#666666" stroke-width="0.9" stroke-linejoin="round" />
<path d="M440.19 410.59L447.38 413.62L441.75 416.27L434.56 413.21Z" fill="#666666" stroke="#666666" stroke-width="0.9" stroke-linejoin="round" />
<path d="M449.77 414.63L456.96 417.66L451.33 420.36L444.14 417.29Z" fill="#666666" stroke="#666666" stroke-width="0.9" stroke-linejoin="round" />
<path d="M459.36 418.67L466.55 421.70L460.91 424.44L453.72 421.38Z" fill="#666666" stroke="#666666" stroke-width="0.9" stroke-linejoin="round" />
<path d="M468.95 422.71L476.14 425.74L470.50 428.52L463.31 425.46Z" fill="#666666" stroke="#666666" stroke-width="0.9" stroke-linejoin="round" />
<path d="M478.53 426.75L485.72 429.78L480.08 432.60L472.89 429.54Z" fill="#666666" stroke="#666666" stroke-width="0.9" stroke-linejoin="round" />
<path d="M488.12 430.79L495.31 433.83L489.66 436.68L482.47 433.62Z" fill="#666666" stroke="#666666" stroke-width="0.9" stroke-linejoin="round" />
<path d="M497.71 434.84L504.89 437.87L499.24 440.77L492.06 437.70Z" fill="#666666" stroke="#666666" stroke-width="0.9" stroke-linejoin="round" />
<path d="M507.29 438.88L521.19 444.74L515.53 447.71L501.64 441.79Z" fill="#666666" stroke="#666666" stroke-width="0.9" stroke-linejoin="round" />
<path d="M377.11 390.33L396.75 398.73L391.14 401.20L371.50 392.72Z" fill="#666666" stroke="#666666" stroke-width="0.9" stroke-linejoin="round" />
<path d="M399.15 399.75L406.33 402.82L400.72 405.33L393.53 402.23Z" fill="#666666" stroke="#666666" stroke-width="0.9" stroke-linejoin="round" />
<path d="M408.73 403.85L415.92 406.92L410.30 409.47L403.11 406.37Z" fill="#666666" stroke="#666666" stroke-width="0.9" stroke-linejoin="round" />
<path d="M418.31 407.94L425.50 411.01L419.87 413.61L412.69 410.50Z" fill="#666666" stroke="#666666" stroke-width="0.9" stroke-linejoin="round" />
<path d="M427.89 412.04L435.08 415.11L429.45 417.74L422.27 414.64Z" fill="#666666" stroke="#666666" stroke-width="0.9" stroke-linejoin="round" />
<path d="M437.47 416.13L444.66 419.21L439.03 421.88L431.85 418.78Z" fill="#666666" stroke="#666666" stroke-width="0.9" stroke-linejoin="round" />
<path d="M447.06 420.23L454.24 423.30L448.61 426.02L441.42 422.91Z" fill="#666666" stroke="#666666" stroke-width="0.9" stroke-linejoin="round" />
<path d="M456.64 424.33L463.82 427.40L458.19 430.15L451.00 427.05Z" fill="#666666" stroke="#666666" stroke-width="0.9" stroke-linejoin="round" />
<path d="M466.22 428.42L473.41 431.49L467.76 434.29L460.58 431.19Z" fill="#666666" stroke="#666666" stroke-width="0.9" stroke-linejoin="round" />
<path d="M475.80 432.52L482.99 435.59L477.34 438.43L470.16 435.32Z" fill="#666666" stroke="#666666" stroke-width="0.9" stroke-linejoin="round" />
<path d="M485.38 436.61L492.57 439.68L486.92 442.56L479.74 439.46Z" fill="#666666" stroke="#666666" stroke-width="0.9" stroke-linejoin="round" />
<path d="M494.96 440.71L504.07 444.60L498.41 447.53L489.31 443.60Z" fill="#666666" stroke="#666666" stroke-width="0.9" stroke-linejoin="round" />
<path d="M506.46 445.62L513.65 448.70L507.99 451.66L500.81 448.56Z" fill="#666666" stroke="#666666" stroke-width="0.9" stroke-linejoin="round" />
<path d="M369.64 393.51L379.21 397.66L373.30 400.22L363.73 396.03Z" fill="#666666" stroke="#666666" stroke-width="0.9" stroke-linejoin="round" />
<path d="M381.61 398.70L389.75 402.23L383.83 404.83L375.70 401.27Z" fill="#666666" stroke="#666666" stroke-width="0.9" stroke-linejoin="round" />
<path d="M392.14 403.27L400.76 407.00L394.84 409.66L386.23 405.88Z" fill="#666666" stroke="#666666" stroke-width="0.9" stroke-linejoin="round" />
<path d="M403.15 408.04L444.81 426.09L438.88 428.94L397.24 410.70Z" fill="#666666" stroke="#666666" stroke-width="0.9" stroke-linejoin="round" />
<path d="M447.21 427.13L454.39 430.24L448.45 433.14L441.27 429.99Z" fill="#666666" stroke="#666666" stroke-width="0.9" stroke-linejoin="round" />
<path d="M456.78 431.28L463.97 434.39L458.03 437.33L450.85 434.19Z" fill="#666666" stroke="#666666" stroke-width="0.9" stroke-linejoin="round" />
<path d="M466.36 435.43L473.54 438.54L467.60 441.52L460.42 438.38Z" fill="#666666" stroke="#666666" stroke-width="0.9" stroke-linejoin="round" />
<path d="M475.94 439.58L483.12 442.69L477.17 445.72L469.99 442.57Z" fill="#666666" stroke="#666666" stroke-width="0.9" stroke-linejoin="round" />
<path d="M496.05 448.30L506.11 452.65L500.15 455.78L490.09 451.38Z" fill="#666666" stroke="#666666" stroke-width="0.9" stroke-linejoin="round" />
<path d="M481.75 445.65L489.89 449.20L487.55 450.41L479.41 446.84Z" fill="#666666" stroke="#666666" stroke-width="0.9" stroke-linejoin="round" />
<path d="M488.21 452.35L498.26 456.77L496.37 457.76L486.33 453.33Z" fill="#666666" stroke="#666666" stroke-width="0.9" stroke-linejoin="round" />
<path d="M467.15 443.10L475.29 446.67L473.41 447.63L465.27 444.04Z" fill="#666666" stroke="#666666" stroke-width="0.9" stroke-linejoin="round" />
<path d="M382.60 428.40L405.00 420.80L436.20 433.40L414.60 443.20Z" fill="#E2E2E2" stroke="#A0A0A0" stroke-width="0.8" stroke-linejoin="round" />
<path d="M609.40 299.60L611.30 301.60L569.60 427.20L567.40 425.40Z" fill="#6E6E6E" stroke="#3E3E3E" stroke-width="0.8" stroke-linejoin="round" />
<path d="M457.9 253.7L608.2 298.9Q610.4 299.7 609.7 301.8L567.6 424.9L422 365.9L455.4 255.2Q456.1 253.1 457.9 253.7Z" fill="#565656" stroke="#3E3E3E" stroke-width="1" stroke-linejoin="round"/>
<path d="M460.40 264.20L597.40 306.60L563.50 410.91L430.60 358.41Z" fill="#5F97C8" stroke-linejoin="round" />
<path d="M462.20 265.10L597.40 306.60L564.20 408.51L433.20 356.41Z" fill="#CBE7FB" stroke-linejoin="round" />
</svg>
<span class="t" style="left:353.5px;top:13.53px;font-size:12.6px;line-height:12.6px;color:#FFFFFF;font-weight:normal;letter-spacing:0px;">NotePC01.pptx</span><span class="t" style="left:447.4px;top:13.53px;font-size:12.6px;line-height:12.6px;color:#FFFFFF;font-weight:normal;letter-spacing:0px;">-</span><span class="t" style="left:461px;top:13.53px;font-size:12.6px;line-height:12.6px;color:#FFFFFF;font-weight:normal;letter-spacing:0px;">PowerPoint</span><span class="t" style="left:647.3px;top:44.55px;font-size:12.7px;line-height:12.7px;color:#FFFFFF;font-weight:normal;letter-spacing:0px;">Acrobat</span><span class="t" style="left:373.2px;top:73.63px;font-size:12.6px;line-height:12.6px;color:#A6A6A6;font-weight:normal;letter-spacing:0px;">18</span><span class="t" style="left:227.4px;top:95.95px;font-size:11.4px;line-height:11.4px;color:#A6A6A6;font-weight:bold;letter-spacing:0px;">B</span><span class="t" style="left:252.6px;top:95.27px;font-size:12.2px;line-height:12.2px;color:#A6A6A6;font-weight:bold;letter-spacing:0px;font-style:italic;font-family:'Liberation Serif',serif;">I</span><span class="t" style="left:275.7px;top:96.02px;font-size:11.2px;line-height:11.2px;color:#A6A6A6;font-weight:bold;letter-spacing:0px;transform:scaleX(0.95);transform-origin:0 0;">U</span><span class="t" style="left:301.6px;top:96.64px;font-size:12px;line-height:12px;color:#D4D4D4;font-weight:bold;letter-spacing:0px;">S</span><span class="t" style="left:300.6px;top:95.64px;font-size:12px;line-height:12px;color:#A6A6A6;font-weight:bold;letter-spacing:0px;">S</span><span class="t" style="left:320.4px;top:96.46px;font-size:10.8px;line-height:10.8px;color:#A6A6A6;font-weight:normal;letter-spacing:-0.5px;">abc</span><span class="t" style="left:344.2px;top:94.23px;font-size:10.6px;line-height:10.6px;color:#A6A6A6;font-weight:normal;letter-spacing:-0.8px;">AV</span><span class="t" style="left:224.1px;top:115.44px;font-size:9.4px;line-height:9.4px;color:#A6A6A6;font-weight:normal;letter-spacing:-0.5px;">ab</span><span class="t" style="left:266px;top:118.01px;font-size:14.4px;line-height:14.4px;color:#A6A6A6;font-weight:normal;letter-spacing:0px;">A</span><span class="t" style="left:302px;top:118.73px;font-size:12.6px;line-height:12.6px;color:#A6A6A6;font-weight:normal;letter-spacing:0px;">Aa</span><span class="t" style="left:350.4px;top:119.22px;font-size:13.8px;line-height:13.8px;color:#A6A6A6;font-weight:normal;letter-spacing:0px;">A</span><span class="t" style="left:375px;top:121.15px;font-size:11.4px;line-height:11.4px;color:#A6A6A6;font-weight:normal;letter-spacing:0px;">A</span><span class="t" style="left:403.6px;top:116.76px;font-size:10.8px;line-height:10.8px;color:#A6A6A6;font-weight:normal;letter-spacing:0px;">A</span><span class="t" style="left:479.8px;top:70.06px;font-size:5.6px;line-height:5.6px;color:#A6A6A6;font-weight:bold;letter-spacing:0px;">1</span><span class="t" style="left:479.8px;top:75.76px;font-size:5.6px;line-height:5.6px;color:#A6A6A6;font-weight:bold;letter-spacing:0px;">2</span><span class="t" style="left:479.8px;top:81.56px;font-size:5.6px;line-height:5.6px;color:#A6A6A6;font-weight:bold;letter-spacing:0px;">3</span><span class="t" style="left:568.8px;top:70.02px;font-size:11.2px;line-height:11.2px;color:#A6A6A6;font-weight:normal;letter-spacing:0px;">A</span><span class="t" style="left:625.6px;top:80.36px;font-size:13.4px;line-height:13.4px;color:#2E64A8;font-weight:bold;letter-spacing:0px;">A</span><span class="t" style="left:745.7px;top:108.34px;font-size:12px;line-height:12px;color:#262626;font-weight:normal;letter-spacing:0px;transform:scaleX(0.89);transform-origin:0 0;">PDF</span><span class="t" style="left:727.5px;top:144.04px;font-size:12px;line-height:12px;color:#262626;font-weight:normal;letter-spacing:0px;transform:scaleX(1.035);transform-origin:0 0;">Adobe A</span><span class="t" style="left:776px;top:145.98px;font-size:9px;line-height:9px;color:#262626;font-weight:normal;letter-spacing:0.5px;">···</span><span class="t" style="left:14.3px;top:173.81px;font-size:17px;line-height:17px;color:#D04A28;font-weight:normal;letter-spacing:0px;font-family:'Liberation Serif',serif;">1</span><span class="t" style="left:51.2px;top:602.27px;font-size:12.2px;line-height:12.2px;color:#2E2E2E;font-weight:normal;letter-spacing:0.5px;">1/1</span><span class="t" style="left:808.2px;top:601.87px;font-size:12.2px;line-height:12.2px;color:#2E2E2E;font-weight:normal;letter-spacing:0px;">75%</span>
</div></body></html>
